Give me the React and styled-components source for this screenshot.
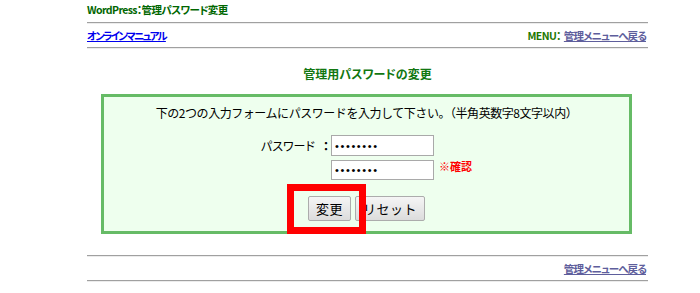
import React from "react";
import styled, { createGlobalStyle } from "styled-components";

const Global = createGlobalStyle`
  html, body { margin: 0; padding: 0; background: #fff; }
  body {
    font-family: "Noto Sans CJK JP", "Liberation Sans", sans-serif;
    font-size: 12px;
    color: #000;
  }
`;

const Page = styled.div`
  position: relative;
  width: 561px;
  margin-left: 87px;
`;

const Header = styled.div`
  height: 22px;
  display: flex;
  align-items: center;
  padding-bottom: 3px;
  box-sizing: border-box;
  font-size: 10.5px;
  font-weight: bold;
  color: #006600;
  font-feature-settings: "palt";
  letter-spacing: -0.6px;
`;

const Rule = styled.div`
  height: 0;
  border-top: 1px solid #a0a0a0;
  border-bottom: 1px solid #ececec;
`;

const NavRow = styled.div`
  height: 23px;
  display: flex;
  align-items: center;
  justify-content: ${(p) => (p.$end ? "flex-end" : "space-between")};
  padding-right: 2px;
  font-size: 10.5px;
  font-weight: bold;
  font-feature-settings: "palt";
`;

const Link = styled.a`
  color: ${(p) => (p.$visited ? "#5e5e9c" : "#0000ee")};
  text-decoration: underline;
  letter-spacing: ${(p) => (p.$visited ? "-0.9px" : "-1.8px")};
  cursor: pointer;
`;

const MenuLabel = styled.span`
  color: #227700;
  margin-right: 3px;
  letter-spacing: -0.6px;
`;

const Title = styled.h2`
  margin: 0;
  height: 45px;
  display: flex;
  align-items: center;
  justify-content: center;
  padding-top: 4px;
  box-sizing: border-box;
  font-size: 12px;
  font-weight: bold;
  color: #117711;
  font-feature-settings: "palt";
`;

const Box = styled.div`
  width: 531px;
  height: 140px;
  margin: 0 auto 0 14px;
  box-sizing: border-box;
  border: 3px solid #66bb66;
  background: #eeffee;
  padding-top: 8px;
  display: flex;
  flex-direction: column;
  align-items: center;
`;

const Lead = styled.p`
  margin: 0;
  font-size: 12px;
  line-height: 16px;
  letter-spacing: -0.45px;
`;

const FormGrid = styled.div`
  display: grid;
  grid-template-columns: auto auto;
  column-gap: 2px;
  row-gap: 4px;
  margin-top: 14px;
`;

const Label = styled.label`
  display: flex;
  align-items: center;
  justify-content: flex-end;
  font-size: 12px;
  font-feature-settings: "palt";
`;

const Colon = styled.span`
  margin-left: 8px;
  font-weight: bold;
`;

const Cell = styled.div`
  display: flex;
  align-items: flex-start;
`;

const Input = styled.input`
  width: 103px;
  height: ${(p) => p.$h}px;
  box-sizing: border-box;
  border: 1px solid #a9a9a9;
  background: #fff;
  padding: 0 3px;
  font-size: 11px;
  color: #000;
  letter-spacing: 1.6px;
  outline: none;
`;

const Note = styled.span`
  margin-left: 5px;
  font-size: 11px;
  font-weight: bold;
  color: #ff0000;
  line-height: 12px;
`;

const Buttons = styled.div`
  display: flex;
  gap: 4px;
  margin-top: 16px;
`;

const Button = styled.button`
  height: 25px;
  padding: 0 7px;
  box-sizing: border-box;
  border: 1px solid #acacac;
  border-radius: 2px;
  background: linear-gradient(#f5f5f5, #dcdcdc);
  font-family: "Noto Sans CJK JP", sans-serif;
  font-size: 13px;
  line-height: 1;
  color: #000;
  letter-spacing: 0.5px;
  cursor: pointer;
`;

const Gap = styled.div`
  height: 21px;
`;

const Highlight = styled.div`
  position: absolute;
  left: 200px;
  top: 184px;
  width: 79px;
  height: 50px;
  box-sizing: border-box;
  border: 7px solid #ff0000;
  pointer-events: none;
`;

export default function App() {
  return (
    <>
      <Global />
      <Page>
        <Header>WordPress：管理パスワード変更</Header>
        <Rule />
        <NavRow>
          <Link>オンラインマニュアル</Link>
          <span>
            <MenuLabel>MENU：</MenuLabel>
            <Link $visited>管理メニューへ戻る</Link>
          </span>
        </NavRow>
        <Rule />
        <Title>管理用パスワードの変更</Title>
        <Box>
          <Lead>下の2つの入力フォームにパスワードを入力して下さい。（半角英数字8文字以内）</Lead>
          <FormGrid>
            <Label>
              パスワード<Colon>：</Colon>
            </Label>
            <Cell>
              <Input type="password" defaultValue="12345678" $h={21} />
            </Cell>
            <span />
            <Cell>
              <Input type="password" defaultValue="12345678" $h={20} />
              <Note>※確認</Note>
            </Cell>
          </FormGrid>
          <Buttons>
            <Button>変更</Button>
            <Button>リセット</Button>
          </Buttons>
        </Box>
        <Gap />
        <Rule />
        <NavRow $end>
          <Link $visited>管理メニューへ戻る</Link>
        </NavRow>
        <Rule />
        <Highlight />
      </Page>
    </>
  );
}
